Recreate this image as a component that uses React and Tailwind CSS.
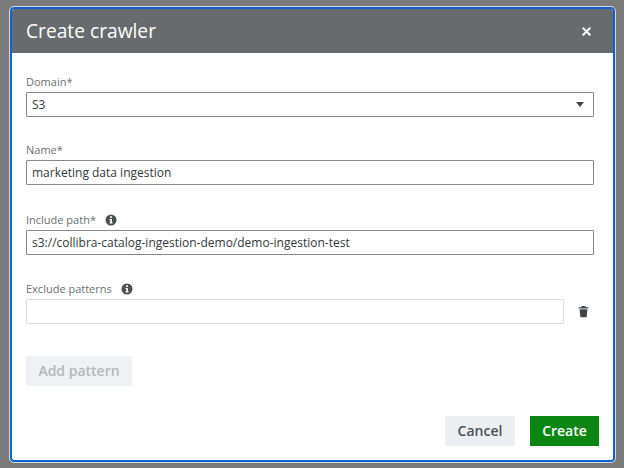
import { X } from 'lucide-react';

const InfoIcon = () => (
    <svg width="12" height="12" viewBox="0 0 12 12" className="block">
        <circle cx="6" cy="6" r="5.5" fill="#4b5055" />
        <rect x="5.1" y="2.2" width="1.8" height="1.7" fill="#fff" />
        <path d="M4.5 5h2.4v3.4h.7v1H4.5v-1h.7V6h-.7z" fill="#fff" />
    </svg>
);

const TrashIcon = () => (
    <svg width="11" height="13" viewBox="0 0 12 13" className="block">
        <path d="M4.2 0.6h3.6l.5 1.2h3v1.3H.7V1.8h3z" fill="#3f444a" />
        <path d="M1.8 4h8.4l-.7 8.2q-.1.7-.8.7H3.3q-.7 0-.8-.7z" fill="#3f444a" />
    </svg>
);

const Field = ({ label, info, value, className = '' }) => (
    <div className={className}>
        <div className="flex items-center h-[18px] mb-[1px] mt-[1px] text-[11px] text-[#6b7075]">
            <span>{label}</span>
            {info && <span className="ml-[9px]"><InfoIcon /></span>}
        </div>
        <div className="h-[25px] border border-[#85898d] rounded-[1px] flex items-center px-[5px] text-[12px] text-[#33383d]">
            {value}
        </div>
    </div>
);

export default function App() {
    return (
        <div className="w-[624px] h-[468px] overflow-hidden bg-[#7b7b7b] pt-[7px] pl-[10px] font-['Open_Sans',sans-serif]">
            <div className="w-[605px] h-[455px] bg-white border-2 border-[#0f62d6] rounded-[4px] outline outline-1 outline-[#d8d8d8] flex flex-col overflow-hidden">
                <div className="h-[44px] shrink-0 bg-[#686b6d] flex items-center justify-between pl-[14px] pr-[20px] text-white">
                    <h3 className="text-[19.2px] font-normal">Create crawler</h3>
                    <X size={13} strokeWidth={3.5} />
                </div>

                <div className="flex-1 flex flex-col pl-[14px] pr-[19px] pt-[19px]">
                    <div>
                        <div className="flex items-center h-[18px] mb-[1px] mt-[1px] text-[11px] text-[#6b7075]">Domain*</div>
                        <div className="h-[25px] border border-[#85898d] rounded-[1px] flex items-center justify-between pl-[5px] pr-[9px] text-[12px] text-[#33383d]">
                            <span>S3</span>
                            <span className="w-0 h-0 border-l-[4.5px] border-r-[4.5px] border-t-[5px] border-l-transparent border-r-transparent border-t-[#3f444a]" />
                        </div>
                    </div>

                    <Field className="mt-[23px]" label="Name*" value="marketing data ingestion" />
                    <Field className="mt-[25px]" label="Include path*" info value="s3://collibra-catalog-ingestion-demo/demo-ingestion-test" />

                    <div className="mt-[24px]">
                        <div className="flex items-center h-[18px] mb-[1px] mt-[1px] text-[11px] text-[#6b7075]">
                            <span>Exclude patterns</span>
                            <span className="ml-[9px]"><InfoIcon /></span>
                        </div>
                        <div className="flex items-center">
                            <div className="w-[538px] h-[25px] border border-[#dcdee0] rounded-[1px]" />
                            <span className="ml-[14px]"><TrashIcon /></span>
                        </div>
                    </div>

                    <button className="mt-[32px] w-[106px] h-[30px] pb-[2px] bg-[#eff2f5] text-[#b4b7ba] text-[14px] font-semibold">
                        Add pattern
                    </button>

                    <div className="mt-[30px] -mr-[5px] flex justify-end gap-[15px]">
                        <button className="w-[70px] h-[30px] pb-[2px] bg-[#eceff2] text-[#4b5055] text-[14px] font-semibold">Cancel</button>
                        <button className="w-[69px] h-[30px] pb-[2px] bg-[#0b8613] text-white text-[14px] font-semibold">Create</button>
                    </div>
                </div>
            </div>
        </div>
    );
}
